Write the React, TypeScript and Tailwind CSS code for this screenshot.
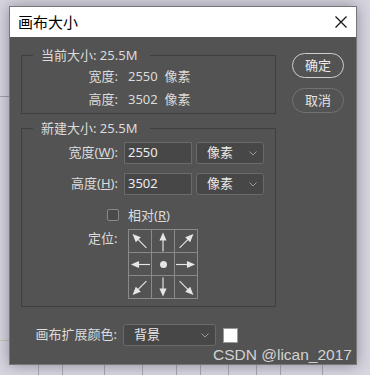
import React from 'react';

const font = { fontFamily: '"Noto Sans", "Noto Sans CJK SC", sans-serif' };

const Arrow = ({ angle }: { angle: number }) => (
    <svg width="23" height="23" viewBox="0 0 23 23" className="block">
        <g transform={`rotate(${angle} 11.5 11.5)`} fill="#e6e6e6" stroke="#e6e6e6">
            {angle % 90 === 0 ? (
                <>
                    <line x1="11.5" y1="9" x2="11.5" y2="22" strokeWidth="1.2" />
                    <polygon points="11.5,2 7.8,10.5 15.2,10.5" stroke="none" />
                </>
            ) : (
                <>
                    <line x1="11.5" y1="7" x2="11.5" y2="21" strokeWidth="1.2" />
                    <polygon points="11.5,0.5 7.8,9 15.2,9" stroke="none" />
                </>
            )}
        </g>
    </svg>
);

const Chevron = () => (
    <svg width="8" height="5" viewBox="0 0 8 5" className="shrink-0">
        <path d="M0.5 0.5 L4 4 L7.5 0.5" fill="none" stroke="#9a9a9a" strokeWidth="1" />
    </svg>
);

const Select = ({ label, width }: { label: string; width: string }) => (
    <div className={`${width} h-[22px] flex items-center justify-between pl-[10px] pr-[6px] bg-[#474747] border border-[#6a6a6a] rounded-[3px] text-[13px] text-[#e8e8e8]`}>
        <span>{label}</span>
        <Chevron />
    </div>
);

const NumInput = ({ value }: { value: string }) => (
    <div className="w-[68px] h-[22px] flex items-center pl-[3px] bg-[#474747] border border-[#6a6a6a] text-[13px] text-[#ececec]">
        {value}
    </div>
);

export default function App() {
    const cells = [315, 0, 45, 270, -1, 90, 225, 180, 135];

    return (
        <div className="relative w-[370px] h-[375px] overflow-hidden bg-[#d8d7e0] pt-[6px] pl-[9px]" style={font}>
            {/* faint sheet lines behind the dialog */}
            <div className="absolute left-0 top-[96px] w-[9px] h-px bg-[#a4a3ab]" />
            <div className="absolute left-0 top-[340px] w-[9px] h-px bg-[#c4c3b0]" />
            <div className="absolute left-0 top-[365px] w-[370px] h-[10px] flex">
                {[38, 62, 104, 142, 176, 200, 228, 256, 280, 322].map((x) => (
                    <div key={x} className="absolute top-0 w-px h-[10px] bg-[#a9a8b1]" style={{ left: x }} />
                ))}
            </div>

            <div className="relative w-[348px] border border-[#777] shadow-[0_0_14px_rgba(40,40,60,0.45)]">
                <div className="h-[30px] bg-white flex items-center justify-between pl-[8px] pr-[9px]">
                    <span className="text-[15px] text-black">画布大小</span>
                    <svg width="12" height="12" viewBox="0 0 12 12">
                        <path d="M0.5 0.5 L11.5 11.5 M11.5 0.5 L0.5 11.5" stroke="#111" strokeWidth="1.2" />
                    </svg>
                </div>

                <div className="h-[327px] bg-[#535353] flex pl-[11px] text-[13px] text-[#dcdcdc]">
                    <div className="w-[255px] pt-[9px]">
                        <fieldset className="h-[68px] border border-[#3f3f3f] pb-[5px]">
                            <legend className="ml-[11px] pl-[8px] pr-[13px] leading-[18px]">当前大小: 25.5M</legend>
                            <div className="grid grid-cols-[96px_1fr] gap-y-[5px] pt-[3px] leading-[18px]">
                                <span className="text-right">宽度:</span>
                                <span className="pl-[10px]">2550&nbsp;&nbsp;像素</span>
                                <span className="text-right">高度:</span>
                                <span className="pl-[10px]">3502&nbsp;&nbsp;像素</span>
                            </div>
                        </fieldset>

                        <fieldset className="mt-[5px] h-[188px] border border-[#3f3f3f]">
                            <legend className="ml-[11px] pl-[8px] pr-[13px] leading-[18px]">新建大小: 25.5M</legend>
                            <div className="flex flex-col gap-[9px] pt-[5px]">
                                <div className="flex items-center">
                                    <span className="w-[96px] text-right">
                                        宽度(<span className="underline">W</span>):
                                    </span>
                                    <div className="ml-[6px] flex gap-[4px]">
                                        <NumInput value="2550" />
                                        <Select label="像素" width="w-[68px]" />
                                    </div>
                                </div>
                                <div className="flex items-center">
                                    <span className="w-[96px] text-right">
                                        高度(<span className="underline">H</span>):
                                    </span>
                                    <div className="ml-[6px] flex gap-[4px]">
                                        <NumInput value="3502" />
                                        <Select label="像素" width="w-[68px]" />
                                    </div>
                                </div>
                            </div>
                            <div className="flex items-center mt-[11px] pl-[85px] leading-[18px]">
                                <span className="w-[12px] h-[12px] border border-[#8a8a8a] rounded-[2px] bg-[#4a4a4a]" />
                                <span className="ml-[9px]">
                                    相对(<span className="underline">R</span>)
                                </span>
                            </div>
                            <div className="flex mt-[5px] pl-[66px]">
                                <span className="w-[40px] leading-[18px]">定位:</span>
                                <div className="grid grid-cols-3 border-l border-t border-[#8a8a8a]">
                                    {cells.map((a, i) => (
                                        <div key={i} className="w-[23px] h-[23px] border-r border-b border-[#8a8a8a] flex items-center justify-center">
                                            {a < 0 ? (
                                                <span className="w-[7px] h-[7px] rounded-full bg-[#e6e6e6]" />
                                            ) : (
                                                <Arrow angle={a} />
                                            )}
                                        </div>
                                    ))}
                                </div>
                            </div>
                        </fieldset>

                        <div className="flex items-center mt-[17px]">
                            <span className="w-[96px] text-right">画布扩展颜色:</span>
                            <div className="ml-[6px]">
                                <Select label="背景" width="w-[93px]" />
                            </div>
                            <span className="ml-[7px] w-[15px] h-[15px] bg-white border border-[#9a9a9a]" />
                        </div>
                    </div>

                    <div className="ml-[16px] pt-[16px] flex flex-col gap-[10px]">
                        <button className="w-[52px] h-[25px] rounded-full border-[1.5px] border-[#cfcfcf] text-[13px] text-[#ececec]">
                            确定
                        </button>
                        <button className="w-[52px] h-[25px] rounded-full border-[1.5px] border-[#727272] text-[13px] text-[#e4e4e4]">
                            取消
                        </button>
                    </div>
                </div>
            </div>

            <span className="absolute left-[213px] top-[345px] text-[15.5px] leading-[20px] text-[#d2d2d2]" style={{ fontFamily: '"Liberation Sans", Arial, sans-serif' }}>
                CSDN @lican_2017
            </span>
        </div>
    );
}
